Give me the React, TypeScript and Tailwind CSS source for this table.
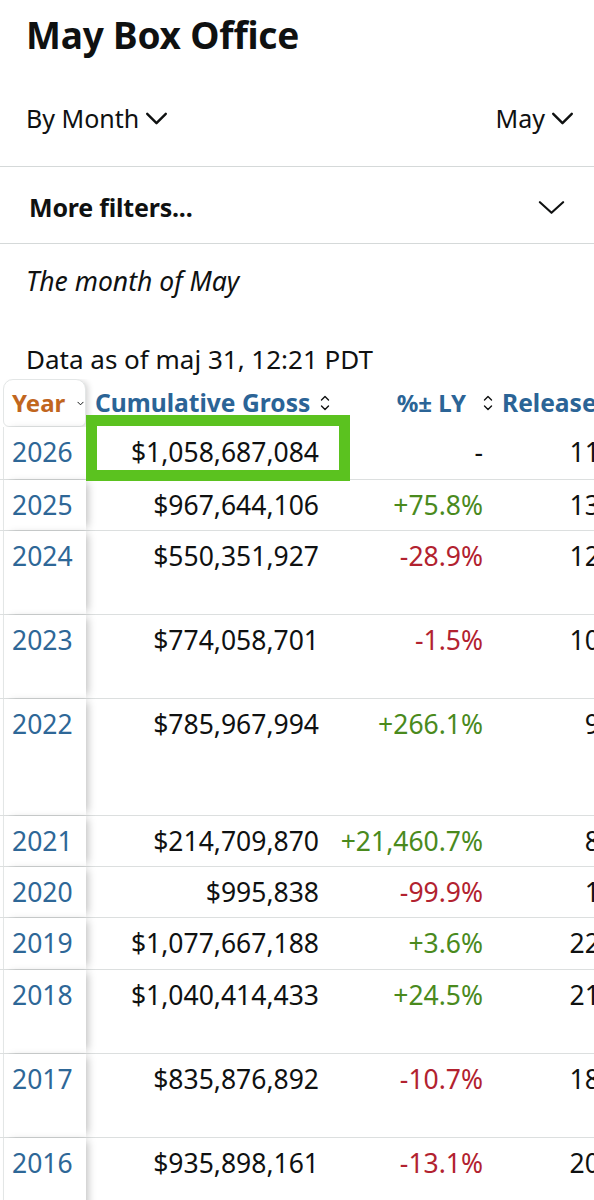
import React from 'react';

type Row = {
  year: string;
  gross: string;
  pct: string;
  releases: string;
  h: string;
};

const rows: Row[] = [
  { year: '2026', gross: '$1,058,687,084', pct: '-', releases: '116', h: 'h-[52px]' },
  { year: '2025', gross: '$967,644,106', pct: '+75.8%', releases: '131', h: 'h-[51px]' },
  { year: '2024', gross: '$550,351,927', pct: '-28.9%', releases: '124', h: 'h-[84px]' },
  { year: '2023', gross: '$774,058,701', pct: '-1.5%', releases: '103', h: 'h-[84px]' },
  { year: '2022', gross: '$785,967,994', pct: '+266.1%', releases: '94', h: 'h-[117px]' },
  { year: '2021', gross: '$214,709,870', pct: '+21,460.7%', releases: '85', h: 'h-[51px]' },
  { year: '2020', gross: '$995,838', pct: '-99.9%', releases: '13', h: 'h-[51px]' },
  { year: '2019', gross: '$1,077,667,188', pct: '+3.6%', releases: '224', h: 'h-[52px]' },
  { year: '2018', gross: '$1,040,414,433', pct: '+24.5%', releases: '215', h: 'h-[84px]' },
  { year: '2017', gross: '$835,876,892', pct: '-10.7%', releases: '186', h: 'h-[84px]' },
  { year: '2016', gross: '$935,898,161', pct: '-13.1%', releases: '205', h: 'h-[84px]' },
];

function Chevron({ className }: { className?: string }) {
  return (
    <svg viewBox="0 0 24 14" fill="none" className={className}>
      <path d="M2 2l10 10L22 2" stroke="currentColor" strokeWidth="2.6" strokeLinecap="round" strokeLinejoin="round" />
    </svg>
  );
}

function SortIcon() {
  return (
    <svg viewBox="0 0 10 18" fill="none" className="w-[10px] h-[18px] text-[#0f1111]">
      <path d="M1.5 6L5 2.5L8.5 6" stroke="currentColor" strokeWidth="1.4" strokeLinecap="round" strokeLinejoin="round" />
      <path d="M1.5 12L5 15.5L8.5 12" stroke="currentColor" strokeWidth="1.4" strokeLinecap="round" strokeLinejoin="round" />
    </svg>
  );
}

function pctColor(p: string) {
  if (p.startsWith('+')) return 'text-[#4a8a1d]';
  if (p.startsWith('-') && p.length > 1) return 'text-[#b2222f]';
  return 'text-[#0f1111]';
}

export default function App() {
  return (
    <div
      className="w-[594px] min-h-[1200px] bg-white overflow-hidden text-[#0f1111]"
      style={{ fontFamily: '"Noto Sans", "Liberation Sans", sans-serif' }}
    >
      {/* タイトル */}
      <div className="h-[70px] px-[26px] pt-[13px]">
        <h1 className="text-[37px] leading-[44px] font-bold tracking-[-0.2px]">May Box Office</h1>
      </div>

      {/* 期間フィルター */}
      <div className="h-[97px] flex items-center justify-between pl-[26px] pr-[20px] border-b border-[#d5d9d9]">
        <div className="flex items-center gap-[6px] text-[25px] leading-[32px]">
          <span>By Month</span>
          <Chevron className="w-[23px] h-[13px]" />
        </div>
        <div className="flex items-center gap-[6px] text-[25px] leading-[32px]">
          <span>May</span>
          <Chevron className="w-[23px] h-[13px]" />
        </div>
      </div>

      <div className="h-[77px] flex items-center justify-between pl-[29px] pr-[29px] pt-[3px] border-b border-[#d5d9d9]">
        <span className="text-[25px] leading-[30px] font-bold tracking-[-0.2px]">More filters...</span>
        <svg viewBox="0 0 28 14" fill="none" className="w-[27px] h-[14px]">
          <path d="M2 2l12 11L26 2" stroke="currentColor" strokeWidth="2.2" strokeLinecap="round" strokeLinejoin="round" />
        </svg>
      </div>

      <div className="h-[95px] px-[26px] pt-[21px]">
        <p className="text-[26.5px] leading-[32px] italic">The month of May</p>
      </div>
      <div className="h-[40px] flex items-center px-[26px]">
        <p className="text-[26px] leading-[32px]">Data as of maj 31, 12:21 PDT</p>
      </div>

      {/* テーブル */}
      <div className="relative w-[594px] overflow-hidden">
        <div className="w-[620px]">
          {/* ヘッダー */}
          <div className="flex h-[48px]">
            <div className="relative z-10 ml-[3px] w-[83px] shrink-0 flex items-center pl-[8px] bg-white border border-[#e3e6e6] rounded-t-[10px] rounded-b-[6px] shadow-[4px_0_6px_-2px_rgba(0,0,0,0.18)]">
              <span className="text-[24px] leading-[30px] font-bold text-[#c1661e]">Year</span>
              <svg viewBox="0 0 8 5" fill="none" className="ml-[12px] w-[7px] h-[5px]">
                <path d="M1 1l3 3 3-3" stroke="#0f1111" strokeWidth="1.1" strokeLinecap="round" strokeLinejoin="round" />
              </svg>
            </div>
            <div className="w-[245px] shrink-0 flex items-center pl-[9px] gap-[10px]">
              <span className="text-[24.6px] leading-[30px] font-bold text-[#2b6496] whitespace-nowrap">Cumulative Gross</span>
              <SortIcon />
            </div>
            <div className="w-[164px] shrink-0 flex items-center justify-end pr-[2px] gap-[17px]">
              <span className="text-[24px] leading-[30px] font-bold text-[#2b6496] whitespace-nowrap">%± LY</span>
              <SortIcon />
            </div>
            <div className="w-[128px] shrink-0 flex items-center pl-[7px]">
              <span className="text-[24.6px] leading-[30px] font-bold text-[#2b6496] whitespace-nowrap">Releases</span>
            </div>
          </div>

          {/* 行 */}
          {rows.map((r, i) => (
            <div key={r.year} className={`flex ${r.h} ${i > 0 ? 'border-t border-[#dcdfdf]' : ''}`}>
              <div className="relative z-10 ml-[3px] w-[83px] shrink-0 pl-[8px] pt-[9px] bg-white border-l border-[#e3e6e6] shadow-[5px_0_8px_-3px_rgba(0,0,0,0.25)]">
                <span className="text-[26.5px] leading-[32px] text-[#2e6797]">{r.year}</span>
              </div>
              <div className="w-[245px] shrink-0 pt-[9px] pr-[12px] text-right">
                <span className="text-[26.5px] leading-[32px]">{r.gross}</span>
              </div>
              <div className="w-[164px] shrink-0 pt-[9px] pr-[12px] text-right">
                <span className={`text-[26.5px] leading-[32px] ${pctColor(r.pct)}`}>{r.pct}</span>
              </div>
              <div className="w-[125px] shrink-0 pt-[9px] pr-[5px] text-right">
                <span className="text-[26.5px] leading-[32px]">{r.releases}</span>
              </div>
            </div>
          ))}
        </div>

        {/* ハイライト枠 */}
        <div className="absolute left-[86px] top-[36px] w-[264px] h-[66px] border-[11px] border-[#5bc21f] z-20" />
      </div>
    </div>
  );
}
